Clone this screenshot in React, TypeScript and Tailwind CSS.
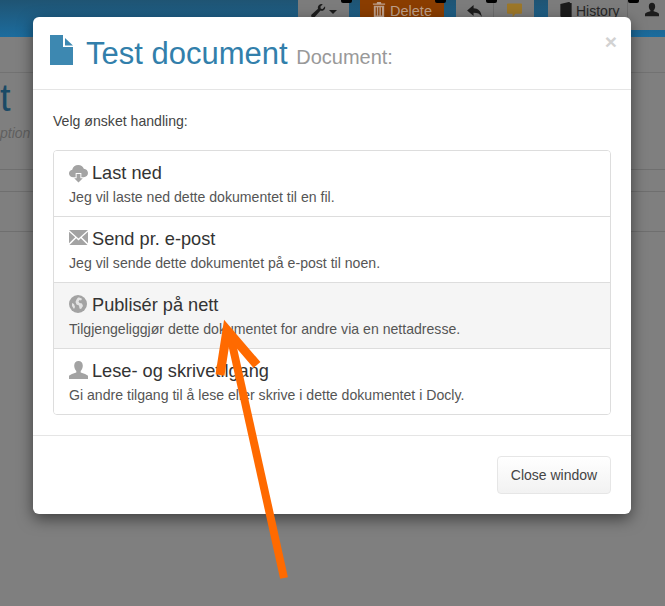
import React from "react";

const CloudDown = () => (
  <svg width="19" height="19" viewBox="0 0 20 19" className="shrink-0">
    <path fill="#a3a3a3" d="M4.500 13.500C2 13.500 0 11.800 0 9.400c0-2 1.500-3.600 3.400-3.900C4 2.600 6.500.5 9.700.5c2.800 0 5.100 1.700 5.900 4.100 2.500.1 4.400 2.100 4.400 4.500 0 2.500-2 4.400-4.500 4.400h-2.500V9H7v4.500z" />
    <path fill="#a3a3a3" d="M8 10h4v4.500h2.500L10 19l-4.500-4.500H8z" />
  </svg>
);
const Mail = () => (
  <svg width="19" height="15" viewBox="0 0 19 15" className="shrink-0 -translate-y-[2px]">
    <path fill="#a3a3a3" d="M0 0h19L9.500 8.500zM0 1.800v11.400L6.200 7.300zM19 1.800v11.400l-6.200-5.900zM7.200 8.300 9.500 10.400l2.300-2.100L18.500 15H.5z" />
  </svg>
);
const Globe = () => (
  <svg width="19" height="18" viewBox="0 0 19 18" className="shrink-0 -translate-y-[1px]">
    <circle cx="9" cy="9" r="9" fill="#a3a3a3" />
    <path fill="#eeeeee" d="M9 2.500c2 0 3 .5 4 1.500l-1 1.500-1.500-.5-1 1.500 1 1.500 2.500.5 1 2.500-2 3-1.500-.5-.5-3-2.500-1-1-2.500 1-2.500z" opacity="0.85" />
    <path fill="#eeeeee" d="M3 8l2 1 1 3-1 2-2-3z" opacity="0.85" />
  </svg>
);
const User = () => (
  <svg width="19" height="18" viewBox="0 0 19 18" className="shrink-0 -translate-y-[1px]">
    <path fill="#a3a3a3" d="M9.500 0c2.600 0 4.300 2 4.300 4.800 0 2.200-1 4.300-2.100 5.300v1.300c2.800.8 6.300 2 7.300 3.400V18H0v-3.200c1-1.400 4.500-2.600 7.300-3.400v-1.300C6.200 9.100 5.200 7 5.200 4.800 5.200 2 6.900 0 9.500 0z" />
  </svg>
);

const items = [
  { icon: <CloudDown />, title: "Last ned", text: "Jeg vil laste ned dette dokumentet til en fil." },
  { icon: <Mail />, title: "Send pr. e-post", text: "Jeg vil sende dette dokumentet på e-post til noen." },
  { icon: <Globe />, title: "Publisér på nett", text: "Tilgjengeliggjør dette dokumentet for andre via en nettadresse.", active: true },
  { icon: <User />, title: "Lese- og skrivetilgang", text: "Gi andre tilgang til å lese eller skrive i dette dokumentet i Docly." },
];

const Nub = ({ className }: { className: string }) => (
  <span className={`absolute top-0 h-[3px] w-[11px] rounded-b-[2px] bg-black ${className}`} />
);

export default function App() {
  return (
    <div className="relative h-[606px] w-[665px] overflow-hidden bg-[#7f7f7f] font-['Liberation_Sans',sans-serif]">
      {/* dimmed page */}
      <div className="flex h-[37px] justify-end bg-gradient-to-b from-[#1f5473] to-[#1b6c9e]">
        <div className="flex h-[30px] items-start">
          <div className="relative flex h-[30px] w-[51px] items-start justify-center gap-[3px] bg-[#7c7c7c] pt-[3px]">
            <Nub className="-right-[3px]" />
            <svg width="16" height="15" viewBox="0 0 16 16">
              <path fill="#1c1c1c" d="M15.500 3.500c.5 2-.2 3.500-1.500 4.300-1 .6-2.300.7-3.300.3L4.500 15c-1 1-3 .8-3.500-.3-.5-1-.3-2 .5-2.700l6.500-6c-.4-1.300-.1-2.700.9-3.700C10 1.200 11.500.8 13 1.200L10.500 4l.5 2 2 .5z" />
            </svg>
            <span className="mt-[7px] h-0 w-0 border-x-[4px] border-t-[4px] border-x-transparent border-t-[#1c1c1c]" />
          </div>
          <div className="relative ml-[11px] flex h-[30px] w-[84px] items-start justify-center gap-[4px] bg-[#8a3d00] pt-[2px] text-[14.5px] leading-[18px] text-[#bd9f8a]">
            <Nub className="-right-[2px]" />
            <svg width="14" height="15" viewBox="0 0 13 16" className="shrink-0">
              <path fill="#bd9f8a" d="M4.500 0h4l.5 1.500h4V3H0V1.500h4zM1 4h11v12H1zm2 1.500V14.500h1.200V5.500zm2.700 0V14.500h1.200V5.500zm2.800 0V14.500h1.200V5.500z" />
            </svg>
            Delete
          </div>
          <div className="relative ml-[12px] flex h-[30px] w-[78px] items-start bg-[#7c7c7c]">
            <Nub className="left-[30px]" />
            <div className="flex h-full w-[38px] items-start justify-center border-r border-[#6c6c6c] pt-[5px]">
              <svg width="15" height="12" viewBox="0 0 16 13">
                <path fill="#1c1c1c" d="M7 0v3.500c5 0 8 3 9 9.500-2-3.500-5-4.500-9-4.500V12L0 6z" />
              </svg>
            </div>
            <div className="flex h-full w-[40px] items-start justify-center pt-[3px]">
              <svg width="15" height="15" viewBox="0 0 16 15">
                <path fill="#9c7729" d="M1 0h14a1 1 0 0 1 1 1v9a1 1 0 0 1-1 1H9l-3 4v-4H1a1 1 0 0 1-1-1V1a1 1 0 0 1 1-1z" />
              </svg>
            </div>
          </div>
          <div className="relative ml-[14px] flex h-[30px] w-[80px] items-start gap-[3px] border-r border-[#6c6c6c] bg-[#7c7c7c] pt-[2px] pl-[11px] text-[14px] leading-[18px] text-[#262626]">
            <Nub className="-right-[12px] z-10" />
            <svg width="14" height="16" viewBox="0 0 14 17" className="shrink-0">
              <path fill="#1c1c1c" d="M1 2 10 0h1v1h2v15H3c-1.500 0-2-.5-2-2z" />
            </svg>
            History
          </div>
          <div className="flex h-[30px] w-[37px] items-start gap-1 overflow-hidden bg-[#7c7c7c] pt-[2px] pl-[17px] text-[14.5px] leading-[18px] text-[#262626]">
            <svg width="14" height="15" viewBox="0 0 19 18" className="shrink-0">
              <path fill="#1c1c1c" d="M9.500 0c2.600 0 4.300 2 4.300 4.800 0 2.200-1 4.300-2.100 5.300v1.300c2.800.8 6.300 2 7.300 3.400V18H0v-3.200c1-1.400 4.500-2.600 7.300-3.400v-1.300C6.200 9.100 5.200 7 5.200 4.800 5.200 2 6.900 0 9.500 0z" />
            </svg>
          </div>
        </div>
      </div>
      <div className="h-[36px] border-b border-[#727272]" />
      <div className="h-[96px] overflow-hidden">
        <div className="text-[38px] leading-[50px] text-[#1a4a66]">t</div>
        <div className="mt-[1px] text-[14px] leading-[18px] italic text-[#5f5f5f]">ption</div>
      </div>
      <div className="h-[22px] border-t border-[#6f6f6f]" />
      <div className="h-[40px] border-t border-[#6f6f6f]" />
      <div className="border-t border-[#6f6f6f]" />

      {/* modal */}
      <div className="absolute top-[17px] left-[33px] h-[497px] w-[598px] overflow-hidden rounded-[6px] bg-white shadow-[0_5px_15px_rgba(0,0,0,0.5)]">
        <div className="relative flex h-[73px] border-b border-[#e5e5e5] pt-[18px] pl-[17px]">
          <svg width="23" height="30" viewBox="0 0 23 30" className="shrink-0">
            <path fill="#3d88b1" d="M0 0h13v12h10v18H0z" />
            <path fill="#3d88b1" d="M15 3l8 7.500h-8z" />
          </svg>
          <h4 className="ml-[13px] text-[31px] leading-[38px] font-normal whitespace-nowrap text-[#327fab]">
            Test document <span className="text-[20px] text-[#999999]">Document:</span>
          </h4>
          <span className="absolute top-[14px] right-[14px] text-[21px] leading-[21px] font-bold text-[#d2d2d2]">×</span>
        </div>
        <div className="px-[20px] pt-[21px]">
          <p className="text-[14.1px] leading-[20px] text-[#444444]">Velg ønsket handling:</p>
          <div className="mt-[19px] overflow-hidden rounded-[4px] border border-[#dddddd]">
            {items.map((it, i) => (
              <div
                key={it.title}
                className={`px-[15px] pt-[10px] ${i > 0 ? "h-[66px] border-t border-[#dddddd]" : "h-[65px]"} ${it.active ? "bg-[#f5f5f5]" : "bg-white"}`}
              >
                <div className="flex h-[24px] items-center gap-[4px] text-[18.2px] leading-[24px] text-[#333333]">
                  {it.icon}
                  <span>{it.title}</span>
                </div>
                <p className="mt-[2px] text-[14.1px] leading-[20px] text-[#555555]">{it.text}</p>
              </div>
            ))}
          </div>
        </div>
        <div className="mt-[20px] flex h-[79px] items-start justify-end border-t border-[#e5e5e5] pt-[20px] pr-[20px]">
          <button className="h-[38px] w-[114px] rounded-[4px] border border-[#e6e6e6] bg-gradient-to-b from-white to-[#f2f2f2] text-[14px] text-[#444444]">
            Close window
          </button>
        </div>
      </div>

      {/* annotation arrow */}
      <svg className="absolute inset-0" width="665" height="606" viewBox="0 0 665 606">
        <path d="M284 578 229 330" stroke="#ff6a00" strokeWidth="8" fill="none" />
        <path d="M220 375 227 330 257 365" stroke="#ff6a00" strokeWidth="9" fill="none" strokeLinejoin="miter" />
      </svg>
    </div>
  );
}
